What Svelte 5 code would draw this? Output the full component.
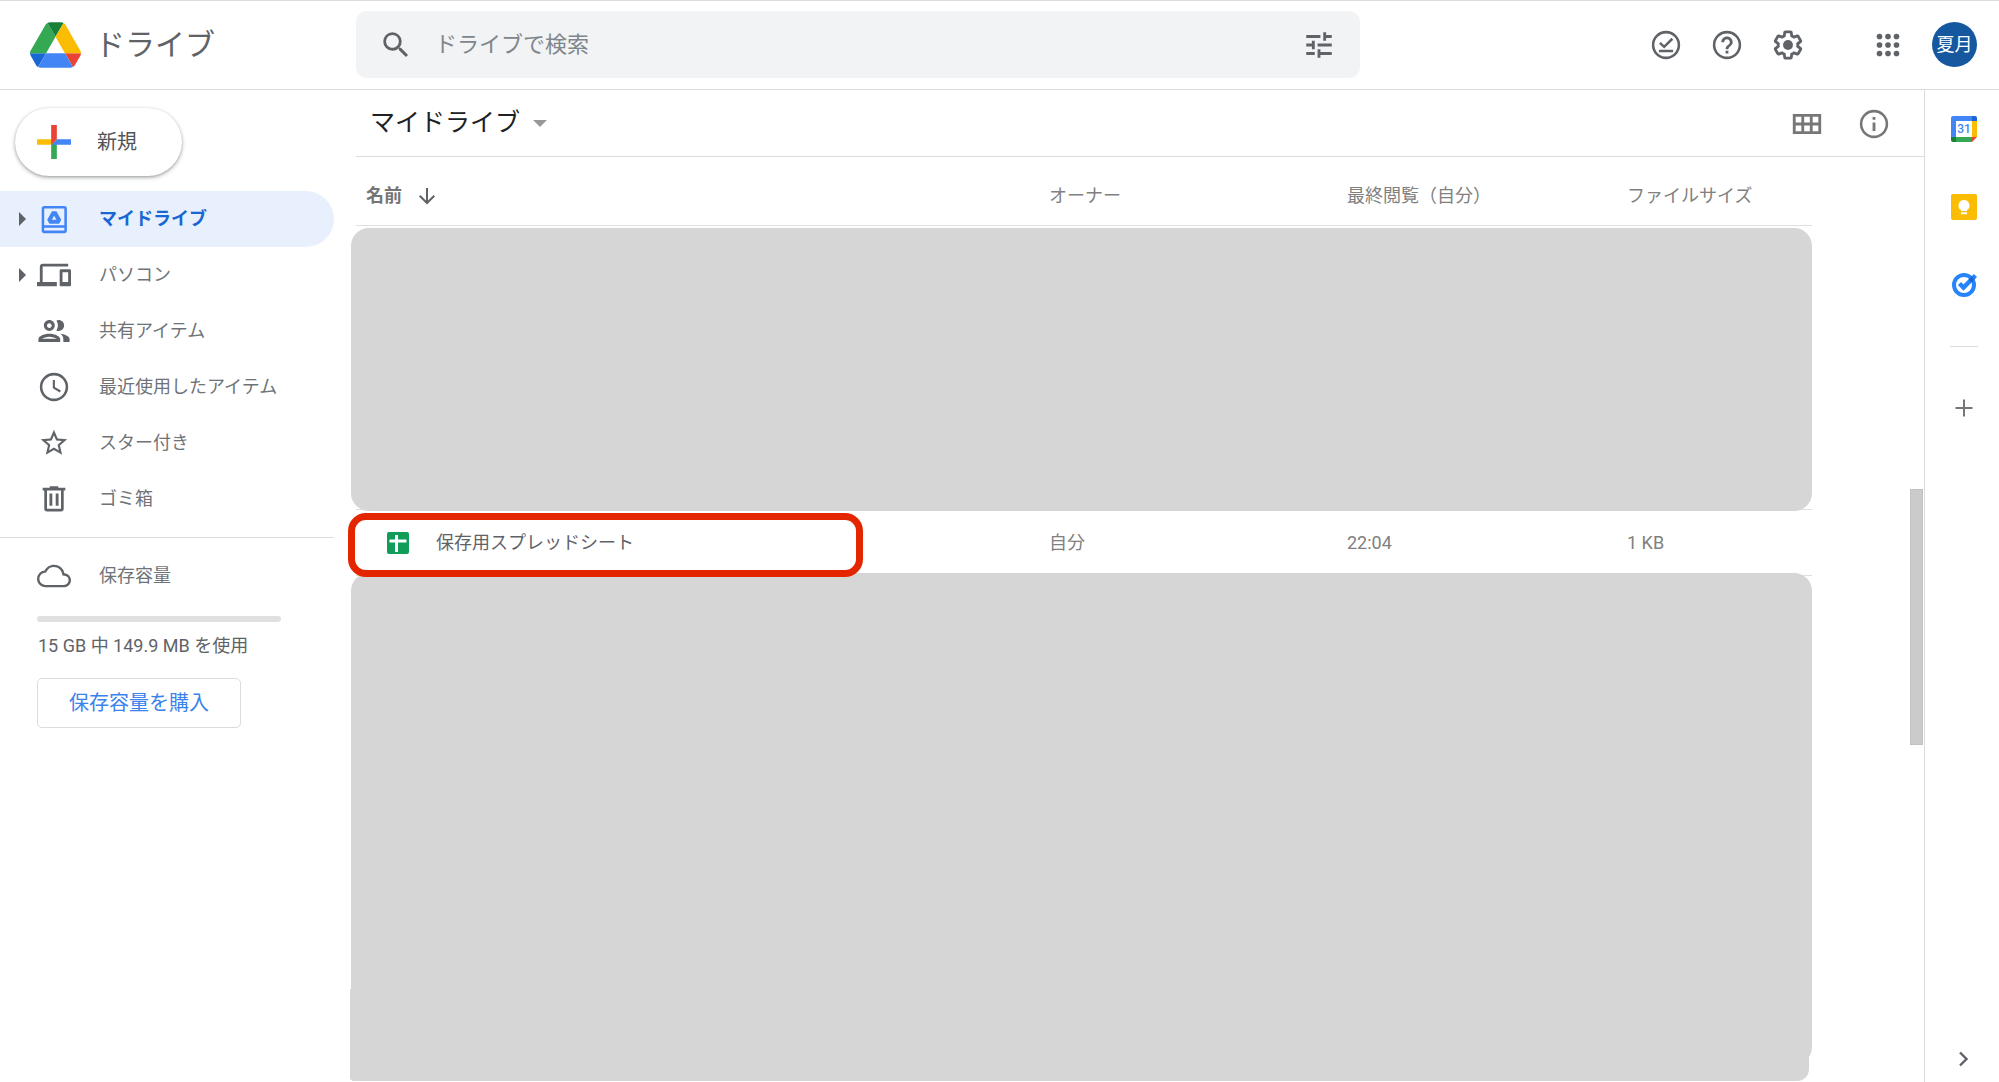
<script>
	let query = $state("");
	let active = $state("drive");

	const navItems = [
		{ id: "drive", label: "マイドライブ", expandable: true },
		{ id: "computers", label: "パソコン", expandable: true },
		{ id: "shared", label: "共有アイテム" },
		{ id: "recent", label: "最近使用したアイテム" },
		{ id: "starred", label: "スター付き" },
		{ id: "trash", label: "ゴミ箱" },
	];

	const files = [
		{ name: "保存用スプレッドシート", owner: "自分", viewed: "22:04", size: "1 KB" },
	];
</script>

{#snippet navIcon(id)}
	<svg class="icon" viewBox="0 0 24 24" aria-hidden="true">
		{#if id === "drive"}
			<rect x="4.2" y="3.7" width="16" height="17.4" rx="1" fill="none" stroke="currentColor" stroke-width="1.8" />
			<path d="M4 17.3h16.4" stroke="currentColor" stroke-width="1.8" />
			<path fill-rule="evenodd" d="M10.6 6.6h3.1l3.4 6-1.5 2.8H8.700l-1.500-2.800zM12.100 9.700l-1.600 2.900h3.200z" fill="currentColor" />
		{:else if id === "computers"}
			<path fill="currentColor" d="M4 6h18V4H4c-1.1 0-2 .9-2 2v11H0v3h14v-3H4V6zm19 2h-6c-.55 0-1 .45-1 1v10c0 .55.45 1 1 1h6c.55 0 1-.45 1-1V9c0-.55-.45-1-1-1zm-1 9h-4v-7h4v7z" />
		{:else if id === "shared"}
			<path transform="translate(-1.2 -1.2) scale(1.1)" fill="currentColor" d="M9 13.75c-2.34 0-7 1.17-7 3.5V19h14v-1.75c0-2.33-4.66-3.5-7-3.5zM4.34 17c.84-.58 2.87-1.25 4.66-1.25s3.82.67 4.66 1.25H4.34zM9 12c1.93 0 3.5-1.57 3.5-3.5S10.93 5 9 5 5.5 6.57 5.5 8.5 7.07 12 9 12zm0-5c.83 0 1.5.67 1.5 1.5S9.83 10 9 10s-1.5-.67-1.5-1.5S8.17 7 9 7zm7.04 6.81c1.16.84 1.96 1.96 1.96 3.44V19h4v-1.75c0-2.02-3.5-3.17-5.96-3.44zM15 12c1.93 0 3.5-1.57 3.5-3.5S16.93 5 15 5c-.54 0-1.04.13-1.5.35.63.89 1 1.98 1 3.15s-.37 2.26-1 3.15c.46.22.96.35 1.5.35z" />
		{:else if id === "recent"}
			<circle cx="12" cy="12" r="9.1" fill="none" stroke="currentColor" stroke-width="1.8" />
			<path d="M11.9 7v5.5l4.6 2.7" fill="none" stroke="currentColor" stroke-width="1.5" />
		{:else if id === "starred"}
			<path transform="translate(.8 .8) scale(.93)" fill="currentColor" d="M22 9.24l-7.19-.62L12 2 9.19 8.63 2 9.24l5.46 4.73L5.82 21 12 17.27 18.18 21l-1.63-7.03L22 9.24zM12 15.4l-3.76 2.27 1-4.28-3.32-2.88 4.38-.38L12 6.1l1.71 4.04 4.38.38-3.32 2.88 1 4.28L12 15.4z" />
		{:else if id === "trash"}
			<path fill="currentColor" d="M4 4h5V3h6v1h5v2H4zM8.8 8.2h2v8.6h-2zM13.2 8.2h2v8.6h-2z" />
			<path d="M6.1 5v13.8c0 .6.4 1 1 1h9.8c.6 0 1-.4 1-1V5" fill="none" stroke="currentColor" stroke-width="1.9" />
		{/if}
	</svg>
{/snippet}

<div class="page">
	<header class="topbar">
		<a class="brand" href="#home">
			<svg class="logo" viewBox="0 0 87.3 78" aria-hidden="true">
				<path d="m6.6 66.85 3.85 6.65c.8 1.4 1.95 2.5 3.3 3.3l13.75-23.8h-27.5c0 1.55.4 3.1 1.2 4.5z" fill="#1967d2" />
				<path d="m43.65 25-13.75-23.8c-1.35.8-2.5 1.9-3.3 3.3l-25.4 44a9.06 9.06 0 0 0-1.2 4.5h27.5z" fill="#34a853" />
				<path d="m73.55 76.8c1.35-.8 2.5-1.9 3.3-3.3l1.6-2.75 7.65-13.25c.8-1.4 1.2-2.95 1.2-4.5h-27.5z" fill="#ea4335" />
				<path d="m43.65 25 13.75-23.8c-1.35-.8-2.9-1.2-4.5-1.2h-18.5c-1.6 0-3.15.45-4.5 1.2z" fill="#188038" />
				<path d="m59.8 53h-32.3l-13.75 23.8c1.35.8 2.9 1.2 4.5 1.2h50.8c1.6 0 3.15-.45 4.5-1.2z" fill="#4285f4" />
				<path d="m73.4 26.5-12.7-22c-.8-1.4-1.95-2.5-3.3-3.3l-13.75 23.8 16.15 28h27.45c0-1.55-.4-3.1-1.2-4.5z" fill="#fbbc04" />
			</svg>
			<span>ドライブ</span>
		</a>

		<form class="search" role="search" onsubmit={(e) => e.preventDefault()}>
			<button type="submit" aria-label="検索">
				<svg class="icon" viewBox="0 0 24 24"><path fill="currentColor" d="M15.5 14h-.79l-.28-.27A6.471 6.471 0 0016 9.5 6.5 6.5 0 109.5 16c1.61 0 3.09-.59 4.23-1.57l.27.28v.79l5 4.99L20.49 19l-4.99-5zm-6 0C7.01 14 5 11.99 5 9.5S7.01 5 9.5 5 14 7.01 14 9.5 11.99 14 9.5 14z" /></svg>
			</button>
			<input type="text" placeholder="ドライブで検索" aria-label="ドライブで検索" bind:value={query}>
			<button type="button" aria-label="検索オプション">
				<svg class="icon" viewBox="0 0 24 24"><path fill="currentColor" d="M3 17v2h6v-2H3zM3 5v2h10V5H3zm10 16v-2h8v-2h-8v-2h-2v6h2zM7 9v2H3v2h4v2h2V9H7zm14 4v-2H11v2h10zm-6-4h2V7h4V5h-4V3h-2v6z" /></svg>
			</button>
		</form>

		<div class="tools">
			<button aria-label="オフライン">
				<svg class="icon" viewBox="0 0 24 24">
					<circle cx="12" cy="12" r="9.1" fill="none" stroke="currentColor" stroke-width="1.8" />
					<path d="M7.7 10.5l3 2.8 5.8-5.7M7 16.2h10" fill="none" stroke="currentColor" stroke-width="1.8" />
				</svg>
			</button>
			<button aria-label="サポート">
				<svg class="icon" viewBox="0 0 24 24">
					<circle cx="12" cy="12" r="9.1" fill="none" stroke="currentColor" stroke-width="1.8" />
					<path fill="currentColor" d="M11 18h2v-2h-2v2zm1-12c-2.21 0-4 1.79-4 4h2c0-1.1.9-2 2-2s2 .9 2 2c0 2-3 1.75-3 5h2c0-2.25 3-2.5 3-5 0-2.21-1.79-4-4-4z" />
				</svg>
			</button>
			<button aria-label="設定">
				<svg class="icon" viewBox="0 0 24 24">
					<path fill="currentColor" d="M13.85 22.25h-3.7c-.74 0-1.36-.54-1.45-1.27l-.27-1.89c-.27-.14-.53-.29-.79-.46l-1.8.72c-.7.26-1.47-.03-1.81-.65L2.2 15.53c-.35-.66-.2-1.44.36-1.88l1.53-1.19c-.01-.15-.02-.3-.02-.46 0-.15.01-.31.02-.46l-1.52-1.19c-.59-.45-.74-1.26-.37-1.88l1.85-3.19c.34-.62 1.11-.9 1.79-.63l1.81.73c.26-.17.52-.32.78-.46l.27-1.91c.09-.7.71-1.25 1.44-1.25h3.7c.74 0 1.36.54 1.45 1.27l.27 1.89c.27.14.53.29.79.46l1.8-.72c.71-.26 1.48.03 1.82.65l1.84 3.18c.36.66.2 1.44-.36 1.88l-1.52 1.19c.01.15.02.3.02.46s-.01.31-.02.46l1.52 1.19c.56.45.72 1.23.37 1.86l-1.86 3.22c-.34.62-1.11.9-1.8.63l-1.8-.72c-.26.17-.52.32-.78.46l-.27 1.91c-.1.68-.72 1.22-1.46 1.22zm-3.23-2h2.76l.37-2.55.53-.22c.44-.18.88-.44 1.34-.78l.45-.34 2.38.96 1.38-2.4-2.03-1.58.07-.56c.03-.26.06-.51.06-.78s-.03-.53-.06-.78l-.07-.56 2.03-1.58-1.39-2.4-2.39.96-.45-.35c-.42-.32-.87-.58-1.33-.77l-.52-.22-.37-2.55h-2.76l-.37 2.55-.53.21c-.44.19-.88.44-1.34.79l-.45.33-2.38-.95-1.39 2.39 2.03 1.58-.07.56a7 7 0 0 0-.06.79c0 .26.02.53.06.78l.07.56-2.03 1.58 1.38 2.4 2.39-.96.45.35c.43.33.86.58 1.33.77l.53.22.38 2.55z" />
					<circle cx="12" cy="12" r="3.5" fill="currentColor" />
				</svg>
			</button>
			<button class="apps" aria-label="アプリ">
				<svg class="icon" viewBox="0 0 24 24" fill="currentColor">
					{#each [6, 12, 18] as cy}
						{#each [6, 12, 18] as cx}
							<circle {cx} {cy} r="2" />
						{/each}
					{/each}
				</svg>
			</button>
			<button class="avatar">夏月</button>
		</div>
	</header>

	<div class="body">
		<aside class="sidebar">
			<button class="new">
				<svg class="icon" viewBox="6 6 24 24" aria-hidden="true">
					<path fill="#34a853" d="M16 16v14h4V20z" />
					<path fill="#4285f4" d="M30 16H20l-4 4h14z" />
					<path fill="#fbbc05" d="M6 16v4h10l4-4z" />
					<path fill="#ea4335" d="M20 16V6h-4v14z" />
				</svg>
				新規
			</button>

			<nav>
				{#each navItems as item}
					<a
						class="nav-item"
						class:active={active === item.id}
						href="#{item.id}"
						onclick={() => (active = item.id)}
					>
						<span class="expander" class:shown={item.expandable}></span>
						{@render navIcon(item.id)}
						<span class="label">{item.label}</span>
					</a>
				{/each}
			</nav>

			<div class="storage">
				<a class="nav-item" href="#storage">
					<span class="expander"></span>
					<svg class="icon" viewBox="0 0 24 24" aria-hidden="true"><path fill="currentColor" d="M19.35 10.04A7.49 7.49 0 0012 4C9.11 4 6.6 5.64 5.35 8.04A5.994 5.994 0 000 14c0 3.31 2.69 6 6 6h13c2.76 0 5-2.24 5-5 0-2.64-2.05-4.78-4.65-4.96zM19 18.3H6c-2.4 0-4.3-1.9-4.3-4.3 0-2.2 1.6-4 3.8-4.3l1-.1.4-.9A5.8 5.8 0 0112 5.7c2.8 0 5.1 2 5.7 4.7l.3 1.3 1.3.1A3.3 3.3 0 0122.3 15c0 1.8-1.5 3.3-3.3 3.3z" /></svg>
					<span class="label">保存容量</span>
				</a>
				<div class="meter"></div>
				<p>15 GB 中 149.9 MB を使用</p>
				<button class="buy">保存容量を購入</button>
			</div>
		</aside>

		<main>
			<div class="toolbar">
				<button class="crumb">
					マイドライブ
					<span class="caret"></span>
				</button>
				<div class="view-tools">
					<button aria-label="グリッド レイアウト">
						<svg class="icon" viewBox="0 0 24 24">
							<path d="M3 5.9h18v12.2H3zM3 12h18M9 5.9v12.2M15 5.9v12.2" fill="none" stroke="currentColor" stroke-width="2" />
						</svg>
					</button>
					<button aria-label="詳細を表示">
						<svg class="icon" viewBox="0 0 24 24">
							<circle cx="12" cy="12" r="9.1" fill="none" stroke="currentColor" stroke-width="1.8" />
							<path fill="currentColor" d="M11 7h2v2h-2zM11 11h2v6h-2z" />
						</svg>
					</button>
				</div>
			</div>

			<div class="list">
				<table>
					<thead>
						<tr>
							<th class="name">
								<span>名前</span>
								<svg class="sort" viewBox="0 0 24 24" aria-hidden="true"><path d="M12 4v15M4.7 11.7L12 19l7.3-7.3" fill="none" stroke="#5f6368" stroke-width="2" /></svg>
							</th>
							<th class="owner">オーナー</th>
							<th class="viewed">最終閲覧（自分）</th>
							<th class="size">ファイルサイズ</th>
						</tr>
					</thead>
					<tbody>
						<tr class="masked">
							<td colspan="4"><div class="mask"></div></td>
						</tr>
						{#each files as file}
							<tr>
								<td class="marked">
									<span class="file">
										<svg class="sheet" viewBox="0 0 22 22" aria-hidden="true">
											<rect width="22" height="22" rx="2" fill="#0f9d58" />
											<path d="M2.5 9h17M9.500 3v17" stroke="#fff" stroke-width="3" />
										</svg>
										{file.name}
									</span>
								</td>
								<td>{file.owner}</td>
								<td>{file.viewed}</td>
								<td>{file.size}</td>
							</tr>
						{/each}
					</tbody>
				</table>
				<div class="rest"></div>
				<div class="scroll-thumb"></div>
			</div>
		</main>

		<aside class="panel">
			<button aria-label="カレンダー">
				<svg class="app" viewBox="0 0 26 26">
					<path d="M2 0h19v5H5v16H0V2a2 2 0 0 1 2-2z" fill="#4285f4" />
					<path d="M21 0h3a2 2 0 0 1 2 2v3h-5z" fill="#1967d2" />
					<path d="M21 5h5v16h-5z" fill="#fbbc04" />
					<path d="M5 21h16v5H5z" fill="#34a853" />
					<path d="M0 21h5v5H2a2 2 0 0 1-2-2z" fill="#188038" />
					<path d="M21 21h5l-5 5z" fill="#ea4335" />
					<path d="M5 5h16v16H5z" fill="#fff" />
					<text x="13" y="17" text-anchor="middle">31</text>
				</svg>
			</button>
			<button aria-label="Keep">
				<svg class="app" viewBox="0 0 26 26">
					<rect width="26" height="26" rx="2" fill="#fbbc04" />
					<path d="M13 6a5.500 5.500 0 0 0-3 10.100V17h6v-.9A5.500 5.500 0 0 0 13 6zM10 18.300h6v2h-6z" fill="#fff" />
				</svg>
			</button>
			<button aria-label="ToDo リスト">
				<svg class="app" viewBox="0 0 26 26">
					<circle cx="13" cy="13" r="10" fill="none" stroke="#2684fc" stroke-width="4" />
					<path d="M8.500 11.500l4 4 7.500-7.500" fill="none" stroke="#2684fc" stroke-width="4.500" />
					<path d="M17.500 7.500l4-4 3 3-4 4z" fill="#1967d2" />
					<path d="M20.700 4.200l2.300-2.200 3 3-2.300 2.200z" fill="#2684fc" />
				</svg>
			</button>
			<hr>
			<button aria-label="アドオンを取得">
				<svg class="app" viewBox="0 0 26 26"><path d="M13 4.500v17M4.500 13h17" stroke="#777" stroke-width="2" /></svg>
			</button>
			<button class="collapse" aria-label="サイドパネルを非表示">
				<svg class="app" viewBox="0 0 26 26"><path d="M9 6.500l6.500 6.500L9 19.500" fill="none" stroke="#5f6368" stroke-width="2.400" /></svg>
			</button>
		</aside>
	</div>
</div>

<style>
	:global(body) {
		background: #fff;
	}
	.page, .page :global(*), .page :global(*::before), .page :global(*::after) {
		box-sizing: border-box;
	}
	.page {
		min-height: 100vh;
		display: flex;
		flex-direction: column;
		border-top: 1px solid #dcdcdc;
		color: #5f6368;
		font-family: Roboto, "Noto Sans CJK JP", sans-serif;
		font-size: 18px;
		line-height: 24px;
	}
	button {
		display: flex;
		align-items: center;
		padding: 0;
		border: 0;
		background: none;
		color: inherit;
		font: inherit;
		cursor: pointer;
	}
	a {
		color: inherit;
		text-decoration: none;
	}
	svg {
		display: block;
		flex-shrink: 0;
	}
	.icon {
		width: 34px;
		height: 34px;
	}

	.topbar {
		display: flex;
		align-items: center;
		height: 89px;
		padding: 0 22px 1px 0;
		border-bottom: 1px solid #dadce0;
	}
	.brand {
		display: flex;
		align-items: center;
		gap: 14px;
		width: 356px;
		flex-shrink: 0;
		padding-left: 30px;
		font-size: 30px;
		line-height: 40px;
	}
	.logo {
		width: 51px;
		height: 46px;
	}
	.search {
		display: flex;
		align-items: center;
		flex: 0 1 1004px;
		height: 67px;
		padding: 0 24px 0 23px;
		border-radius: 11px;
		background: #f1f3f4;
	}
	.search input {
		flex: 1;
		min-width: 0;
		padding: 0 22px;
		border: 0;
		outline: 0;
		background: none;
		color: #202124;
		font: inherit;
		font-size: 22px;
		line-height: 32px;
	}
	.search input::placeholder {
		color: #80868b;
		opacity: 1;
	}
	.tools {
		display: flex;
		align-items: center;
		gap: 27px;
		margin-left: auto;
	}
	.apps {
		margin-left: 39px;
	}
	.avatar {
		justify-content: center;
		width: 45px;
		height: 45px;
		border-radius: 50%;
		background: #1558a0;
		color: #fff;
	}

	.body {
		display: flex;
		flex: 1;
	}
	.sidebar {
		width: 334px;
		flex-shrink: 0;
		margin-right: 22px;
		padding-top: 18px;
	}
	.new {
		gap: 26px;
		height: 68px;
		margin: 0 0 15px 15px;
		padding: 0 45px 0 22px;
		border-radius: 34px;
		box-shadow: 0 1px 3px rgba(60, 64, 67, 0.4), 0 2px 5px rgba(60, 64, 67, 0.2);
		color: #50555a;
		font-size: 20px;
	}
	.nav-item {
		display: flex;
		align-items: center;
		height: 56px;
	}
	.nav-item .icon {
		margin-right: 28px;
	}
	.label {
		color: #6f7377;
	}
	.nav-item.active {
		border-radius: 0 28px 28px 0;
		background: #e8f0fe;
		font-weight: 700;
	}
	.nav-item.active .label {
		color: #1967d2;
	}
	.nav-item.active .icon {
		color: #4285f4;
	}
	.expander {
		width: 37px;
		padding-left: 19px;
	}
	.expander.shown::before {
		content: "";
		display: block;
		width: 0;
		border: 7px solid transparent;
		border-left-color: #5f6368;
		border-right: 0;
	}
	.storage {
		margin-top: 10px;
		padding-top: 10px;
		border-top: 1px solid #dadce0;
	}
	.meter {
		height: 6px;
		margin: 12px 53px 0 37px;
		border-radius: 3px;
		background: #e0e0e0;
	}
	.storage p {
		margin: 12px 0 20px 38px;
	}
	.buy {
		height: 50px;
		margin-left: 37px;
		padding: 0 31px;
		border: 1px solid #dadce0;
		border-radius: 5px;
		color: #3c82ec;
		font-size: 20px;
	}

	main {
		display: flex;
		flex: 1;
		flex-direction: column;
		min-width: 0;
	}
	.toolbar {
		display: flex;
		align-items: center;
		justify-content: space-between;
		height: 67px;
		padding: 0 33px 0 14px;
		border-bottom: 1px solid #dadce0;
	}
	.crumb {
		gap: 13px;
		color: #202124;
		font-size: 25px;
		line-height: 40px;
	}
	.caret {
		border: 7px solid transparent;
		border-top-color: #999;
		border-bottom: 0;
	}
	.view-tools {
		display: flex;
		gap: 33px;
		padding-top: 2px;
		color: #777;
	}
	.list {
		position: relative;
		display: flex;
		flex: 1;
		flex-direction: column;
		padding-right: 112px;
	}
	table {
		width: 100%;
		border-collapse: separate;
		border-spacing: 0;
		table-layout: fixed;
		color: #808080;
	}
	th, td {
		height: 66px;
		padding: 0;
		border-bottom: 1px solid #e0e0e0;
		font-weight: 400;
		text-align: left;
	}
	th {
		height: 69px;
		padding-top: 10px;
	}
	th.name {
		display: flex;
		align-items: center;
		gap: 13px;
		padding-left: 10px;
		color: #757575;
		font-weight: 700;
	}
	.sort {
		width: 24px;
		height: 24px;
	}
	.owner {
		width: 298px;
	}
	.viewed {
		width: 280px;
	}
	.size {
		width: 185px;
	}
	.masked td {
		position: relative;
		height: 284px;
	}
	/* Private rows are covered; the cover reaches a little past the list edge */
	.mask {
		position: absolute;
		inset: 2px 0 -2px -5px;
		border-radius: 18px;
		background: #d6d6d6;
	}
	.marked {
		position: relative;
		color: #5f6368;
	}
	.marked::after {
		content: "";
		position: absolute;
		z-index: 1;
		top: 3px;
		left: -8px;
		width: 515px;
		height: 64px;
		border: 7px solid #e42600;
		border-radius: 18px;
	}
	.file {
		display: flex;
		align-items: center;
		gap: 27px;
		padding-left: 31px;
	}
	.sheet {
		width: 22px;
		height: 22px;
	}
	.rest {
		position: relative;
		flex: 1;
		margin: -3px 0 17px -5px;
		border-radius: 18px;
		background: #d6d6d6;
	}
	.rest::after {
		content: "";
		position: absolute;
		inset: auto 3px -16px -1px;
		height: 92px;
		border-radius: 0 0 12px 4px;
		background: #d6d6d6;
	}
	.scroll-thumb {
		position: absolute;
		top: 332px;
		right: 1px;
		width: 13px;
		height: 256px;
		border: 1px solid #c2c2c2;
		background: #cbcbcb;
	}

	.panel {
		display: flex;
		flex-direction: column;
		align-items: center;
		gap: 52px;
		width: 75px;
		padding: 26px 0 10px 4px;
		border-left: 1px solid #dadce0;
	}
	.app {
		width: 26px;
		height: 26px;
	}
	.app text {
		fill: #4285f4;
		font-family: Roboto, sans-serif;
		font-size: 12px;
		font-weight: 500;
	}
	.panel hr {
		width: 28px;
		margin: -4px 0;
		border: 0;
		border-top: 1px solid #dadce0;
	}
	.collapse {
		margin-top: auto;
	}
</style>
